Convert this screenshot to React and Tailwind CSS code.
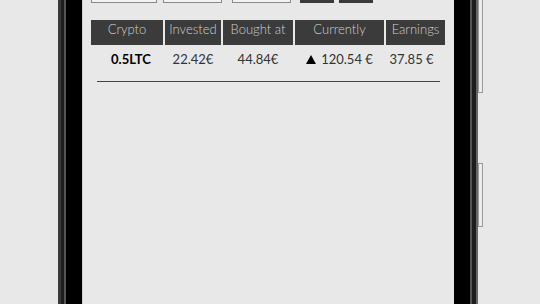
import React from 'react';

// header columns of the holdings table, widths in px
const COLUMNS = [
  { label: 'Crypto', width: 'w-[72px]' },
  { label: 'Invested', width: 'w-[56px]' },
  { label: 'Bought at', width: 'w-[70px]' },
  { label: 'Currently', width: 'w-[89px]' },
  { label: 'Earnings', width: 'w-[59px]' },
];

const HOLDING = {
  crypto: '0.5LTC',
  invested: '22.42€',
  boughtAt: '44.84€',
  currently: '120.54 €',
  earnings: '37.85 €',
};

const InputBox = ({ className = '' }) => (
  <div className={`h-[30px] border border-[#8a8a8a] bg-[#f2f2f2] ${className}`} />
);

const DarkButton = () => <div className="h-[30px] w-[34px] bg-[#3a3a3a]" />;

const SideButton = ({ className = '' }) => (
  <div className={`w-[5px] border border-[#9a9a9a] bg-[#ececec] ${className}`} />
);

const UpArrow = () => (
  <svg width="10" height="9" viewBox="0 0 10 9" className="mb-[1px]">
    <polygon points="5,0 10,9 0,9" fill="#000" />
  </svg>
);

export default function App() {
  return (
    <div
      className="flex w-[540px] h-[304px] overflow-hidden bg-[#e8e8e8]"
      style={{ fontFamily: '"Lato", "Open Sans", sans-serif' }}
    >
      <div className="w-[58px] shrink-0" />

      {/* phone frame */}
      <div className="flex h-full shrink-0">
        <div className="flex h-full">
          <div className="w-[3px] bg-[#3a3a3a]" />
          <div className="w-[3px] bg-[#1e1e1e]" />
          <div className="w-[2px] bg-[#555]" />
          <div className="w-[16px] bg-black" />
          <div className="w-[1px] bg-[#cfcfcf]" />
        </div>

        {/* screen */}
        <div className="w-[371px] h-full bg-[#e8e8e8] flex flex-col">
          <div className="flex items-start -mt-[27px] pl-[8px]">
            <InputBox className="w-[66px]" />
            <InputBox className="w-[59px] ml-[6px]" />
            <InputBox className="w-[59px] ml-[10px]" />
            <div className="flex gap-[5px] ml-[9px]">
              <DarkButton />
              <DarkButton />
            </div>
          </div>

          <div className="flex gap-[2px] pl-[8px] mt-[17px]">
            {COLUMNS.map((c) => (
              <div
                key={c.label}
                className={`${c.width} h-[25px] pb-[5px] bg-[#3b3b3b] text-[#cfcfcf] text-[13px] font-light flex items-center justify-center`}
              >
                {c.label}
              </div>
            ))}
          </div>

          <div className="flex gap-[2px] pl-[8px] h-[28px] pt-[1px] items-center text-[13px] text-[#333]">
            <div className="w-[72px] pl-[8px] text-center font-bold text-black">{HOLDING.crypto}</div>
            <div className="w-[56px] text-center">{HOLDING.invested}</div>
            <div className="w-[70px] text-center">{HOLDING.boughtAt}</div>
            <div className="w-[89px] flex items-center justify-center gap-[5px]">
              <UpArrow />
              <span>{HOLDING.currently}</span>
            </div>
            <div className="w-[59px] pr-[8px] text-center">{HOLDING.earnings}</div>
          </div>

          <div className="ml-[14px] w-[343px] h-[1px] bg-[#444] mt-[8px]" />
        </div>

        <div className="flex h-full">
          <div className="w-[16px] bg-black" />
          <div className="w-[2px] bg-[#555]" />
          <div className="w-[4px] bg-[#1e1e1e]" />
          <div className="w-[2px] bg-[#666]" />
        </div>
      </div>

      {/* side buttons */}
      <div className="flex flex-col">
        <SideButton className="h-[95px] -mt-[2px]" />
        <SideButton className="h-[64px] mt-[70px]" />
      </div>
    </div>
  );
}
